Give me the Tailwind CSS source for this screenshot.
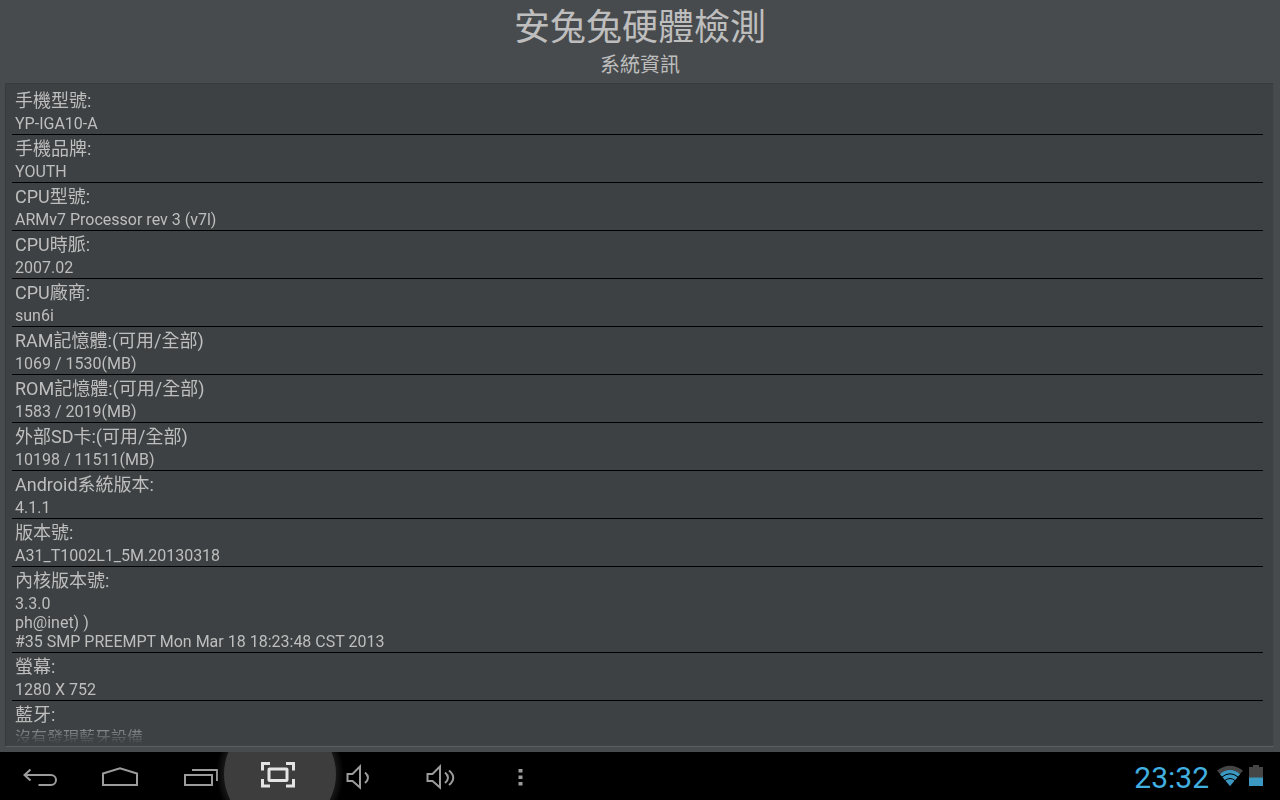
<!DOCTYPE html>
<html lang="zh-Hant">
<head>
    <meta charset="UTF-8">
    <meta name="viewport" content="width=device-width, initial-scale=1.0">
    <title>安兔兔硬體檢測</title>
    <script src="https://cdn.jsdelivr.net/npm/@tailwindcss/browser@4"></script>
</head>
<body class="flex h-screen flex-col overflow-hidden bg-[#484b4d] font-[Roboto,'Noto_Sans_CJK_TC',sans-serif] text-[#bebebe]">
    <!-- Header -->
    <header class="pt-[3px] pb-[7px] text-center">
        <h1 class="text-4xl leading-[51px]">安兔兔硬體檢測</h1>
        <p class="text-xl leading-[22px]">系統資訊</p>
    </header>

    <!-- System info -->
    <main class="mr-1.5 mb-[5px] ml-[5px] flex min-h-0 flex-1 flex-col border border-t-[#383b3d] border-r-[#45494b] border-b-[#5b5f61] border-l-[#383b3d] bg-[#3d4143] pt-[3px] pr-2.5 pb-0.5 pl-1.5">
        <dl class="min-h-0 flex-1 overflow-hidden mask-b-from-[calc(100%-24px)] mask-b-to-100%">
            <div class="border-b border-black px-[3px] pb-px">
                <dt class="text-lg leading-[27px]">手機型號:</dt>
                <dd class="text-base leading-[19px]">YP-IGA10-A</dd>
            </div>
            <div class="border-b border-black px-[3px] pb-px">
                <dt class="text-lg leading-[27px]">手機品牌:</dt>
                <dd class="text-base leading-[19px]">YOUTH</dd>
            </div>
            <div class="border-b border-black px-[3px] pb-px">
                <dt class="text-lg leading-[27px]">CPU型號:</dt>
                <dd class="text-base leading-[19px]">ARMv7 Processor rev 3 (v7l)</dd>
            </div>
            <div class="border-b border-black px-[3px] pb-px">
                <dt class="text-lg leading-[27px]">CPU時脈:</dt>
                <dd class="text-base leading-[19px]">2007.02</dd>
            </div>
            <div class="border-b border-black px-[3px] pb-px">
                <dt class="text-lg leading-[27px]">CPU廠商:</dt>
                <dd class="text-base leading-[19px]">sun6i</dd>
            </div>
            <div class="border-b border-black px-[3px] pb-px">
                <dt class="text-lg leading-[27px]">RAM記憶體:(可用/全部)</dt>
                <dd class="text-base leading-[19px]">1069 / 1530(MB)</dd>
            </div>
            <div class="border-b border-black px-[3px] pb-px">
                <dt class="text-lg leading-[27px]">ROM記憶體:(可用/全部)</dt>
                <dd class="text-base leading-[19px]">1583 / 2019(MB)</dd>
            </div>
            <div class="border-b border-black px-[3px] pb-px">
                <dt class="text-lg leading-[27px]">外部SD卡:(可用/全部)</dt>
                <dd class="text-base leading-[19px]">10198 / 11511(MB)</dd>
            </div>
            <div class="border-b border-black px-[3px] pb-px">
                <dt class="text-lg leading-[27px]">Android系統版本:</dt>
                <dd class="text-base leading-[19px]">4.1.1</dd>
            </div>
            <div class="border-b border-black px-[3px] pb-px">
                <dt class="text-lg leading-[27px]">版本號:</dt>
                <dd class="text-base leading-[19px]">A31_T1002L1_5M.20130318</dd>
            </div>
            <div class="border-b border-black px-[3px] pb-px">
                <dt class="text-lg leading-[27px]">內核版本號:</dt>
                <dd class="text-base leading-[19px]">3.3.0<br>ph@inet) )<br>#35 SMP PREEMPT Mon Mar 18 18:23:48 CST 2013</dd>
            </div>
            <div class="border-b border-black px-[3px] pb-px">
                <dt class="text-lg leading-[27px]">螢幕:</dt>
                <dd class="text-base leading-[19px]">1280 X 752</dd>
            </div>
            <div class="border-b border-black px-[3px] pb-px">
                <dt class="text-lg leading-[27px]">藍牙:</dt>
                <dd class="text-base leading-[19px]">沒有發現藍牙設備</dd>
            </div>
        </dl>
    </main>

    <!-- Navigation bar -->
    <footer class="flex h-12 shrink-0 items-center justify-between overflow-hidden bg-black">
        <nav class="flex text-[#9c9c9c]">
            <button type="button" aria-label="返回">
                <svg class="h-12 w-20" viewBox="0 0 80 48" fill="none" stroke="currentColor" stroke-width="2">
                    <path d="M30.500 17.500 24.500 23l6 5.500M24.500 23H51a5 5 0 0 1 0 10H38.500"/>
                </svg>
            </button>
            <button type="button" aria-label="主畫面">
                <svg class="h-12 w-20" viewBox="0 0 80 48" fill="none" stroke="currentColor" stroke-width="2">
                    <path d="M23 21.500 40 16.200l17 5.300V33H23z"/>
                </svg>
            </button>
            <button type="button" aria-label="最近的應用程式">
                <svg class="h-12 w-20" viewBox="0 0 80 48" fill="none" stroke="currentColor" stroke-width="2">
                    <path d="M25 23h27v10H25zM32 18h25v11"/>
                </svg>
            </button>
            <button type="button" aria-label="螢幕擷取" class="text-[#e4e4e4]">
                <svg class="h-12 w-20 overflow-visible" viewBox="0 0 80 48" fill="none" stroke="currentColor" stroke-width="3">
                    <defs>
                        <radialGradient id="glow">
                            <stop offset="0.850" stop-color="#1c1c1c"/>
                            <stop offset="1" stop-color="#1c1c1c" stop-opacity="0"/>
                        </radialGradient>
                    </defs>
                    <circle cx="40" cy="22" r="64" fill="url(#glow)" stroke="none"/>
                    <circle cx="40" cy="22" r="56" fill="#3d3d3d" stroke="none"/>
                    <path d="M22.500 18.500v-7H30M46 11.500h7.500v7M53.500 27v7H46M30 34h-7.500v-7"/>
                    <rect x="29" y="17" width="18" height="11.500" rx="0.500"/>
                </svg>
            </button>
            <button type="button" aria-label="降低音量">
                <svg class="relative h-12 w-20" viewBox="0 0 80 48" fill="none" stroke="currentColor" stroke-width="2">
                    <path d="M27.500 22h5l7.500-7.500v21L32.500 29h-5z"/>
                    <path d="M45 20.500q6 5 0 10.500"/>
                </svg>
            </button>
            <button type="button" aria-label="提高音量">
                <svg class="h-12 w-20" viewBox="0 0 80 48" fill="none" stroke="currentColor" stroke-width="2">
                    <path d="M27.500 22h5l7.500-7.500v21L32.500 29h-5z"/>
                    <path d="M45 20.500q6 5 0 10.500M49 18.500q8.500 7 0 14.500"/>
                </svg>
            </button>
            <button type="button" aria-label="選單">
                <svg class="h-12 w-20" viewBox="0 0 80 48" fill="currentColor">
                    <path d="M38.500 17h4v3.500h-4zM38.500 23.500h4V27h-4zM38.500 30h4v3.500h-4z"/>
                </svg>
            </button>
        </nav>

        <!-- Status -->
        <div class="flex items-center gap-2 pr-[17px]">
            <time class="pt-1 text-[30px] leading-9 text-[#41b0e0]">23:32</time>
            <div class="flex gap-1.5">
                <svg class="h-[22px] w-[26px]" viewBox="0 0 26 22" role="img" aria-label="Wi-Fi">
                    <path d="M13 21 0 5.500Q13-4 26 5.500z" fill="#454545"/>
                    <path d="M13 21 3 9.200Q13 1 23 9.200z" fill="#3a98c2"/>
                    <path d="M5 12q8-6.500 16 0M8 15.500q5-4 10 0" fill="none" stroke="#000" stroke-width="1"/>
                </svg>
                <svg class="h-[22px] w-3.5" viewBox="0 0 14 22" role="img" aria-label="電池">
                    <path d="M0 2h4V0h6v2h4v11H0z" fill="#454545"/>
                    <path d="M0 12.500h14V21H0z" fill="#3a98c2"/>
                </svg>
            </div>
        </div>
    </footer>
</body>
</html>
